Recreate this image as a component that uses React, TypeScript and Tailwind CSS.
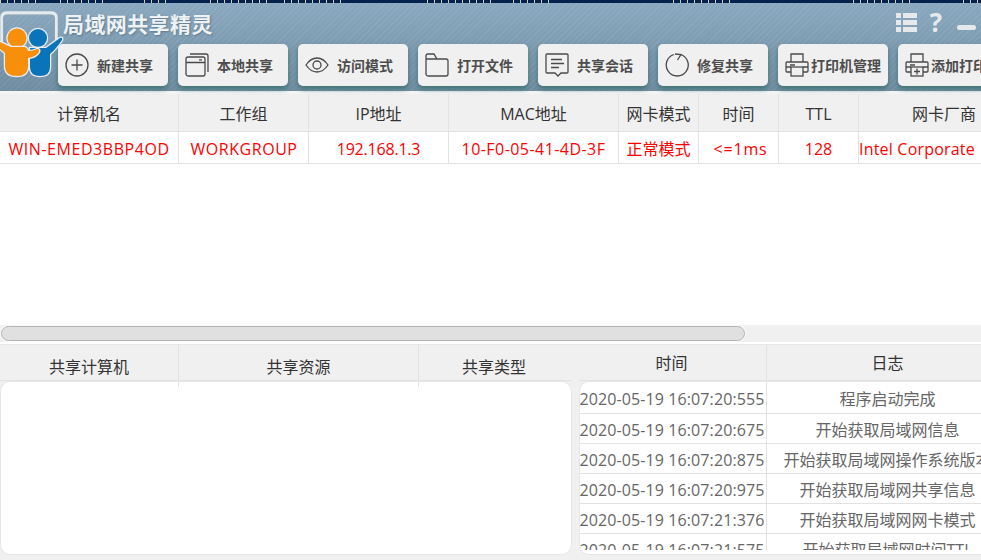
import { ReactNode } from "react";

const font = "font-['Open_Sans','Noto_Sans_CJK_SC',sans-serif]";

// toolbar icons, drawn on a 24 x 24 box
const icons: Record<string, ReactNode> = {
  add: (
    <>
      <circle cx="12" cy="12" r="11" />
      <path d="M12 6.500v11M6.500 12h11" />
    </>
  ),
  windows: (
    <>
      <rect x="1" y="4" width="19" height="19" rx="2" />
      <path d="M1 9.500h19M5 1h16a2 2 0 0 1 2 2v16M14 6.800h3" />
    </>
  ),
  eye: (
    <>
      <path d="M1 12c3-4.500 7-7 11-7s8 2.500 11 7c-3 4.500-7 7-11 7s-8-2.500-11-7z" />
      <circle cx="12" cy="12" r="4" />
    </>
  ),
  folder: <path d="M1 21V3a2 2 0 0 1 2-2h6l3 5h9a2 2 0 0 1 2 2v13a2 2 0 0 1-2 2H3a2 2 0 0 1-2-2zM12 6H1" />,
  chat: (
    <>
      <path d="M2 1h20a1 1 0 0 1 1 1v17a1 1 0 0 1-1 1h-6l-3 3-3-3H2a1 1 0 0 1-1-1V2a1 1 0 0 1 1-1z" />
      <path d="M6 6.500h11M6 10.500h13M6 14.500h8" />
    </>
  ),
  repair: (
    <>
      <path d="M9 1.500a11 11 0 1 0 6.500 0" />
      <path d="M12.500 7l3.500-5.500-6-.5" />
    </>
  ),
  printer: (
    <>
      <path d="M6 9V1h12v8M6 19H2a1 1 0 0 1-1-1V10a1 1 0 0 1 1-1h20a1 1 0 0 1 1 1v8a1 1 0 0 1-1 1h-4" />
      <rect x="6" y="14" width="12" height="9" />
      <path d="M1 14h5M18 14h5M5 12h5" />
    </>
  ),
  printerAdd: (
    <>
      <path d="M6 9V1h12v8M6 19H2a1 1 0 0 1-1-1V10a1 1 0 0 1 1-1h20a1 1 0 0 1 1 1v8a1 1 0 0 1-1 1h-4" />
      <rect x="6" y="14" width="12" height="9" />
      <path d="M1 14h5M18 14h5M5 12h5M12 15.500v6M9 18.500h6" />
    </>
  ),
};

const tools = [
  { icon: "add", label: "新建共享" },
  { icon: "windows", label: "本地共享" },
  { icon: "eye", label: "访问模式" },
  { icon: "folder", label: "打开文件" },
  { icon: "chat", label: "共享会话" },
  { icon: "repair", label: "修复共享" },
  { icon: "printer", label: "打印机管理" },
  { icon: "printerAdd", label: "添加打印机" },
];

const hostCols = [
  { w: "w-[179px]", head: "计算机名", val: "WIN-EMED3BBP4OD", t: "tracking-[0.55px]" },
  { w: "w-[130px]", head: "工作组", val: "WORKGROUP", t: "tracking-[0.55px] pl-[1px]" },
  { w: "w-[140px]", head: "IP地址", val: "192.168.1.3", t: "tracking-[-0.2px]" },
  { w: "w-[170px]", head: "MAC地址", val: "10-F0-05-41-4D-3F", t: "tracking-[0.45px]" },
  { w: "w-[80px]", head: "网卡模式", val: "正常模式", t: "" },
  { w: "w-[80px]", head: "时间", val: "<=1ms", t: "tracking-[0.8px] pl-[4px]" },
  { w: "w-[80px]", head: "TTL", val: "128", t: "" },
];

const logs = [
  ["2020-05-19 16:07:20:555", "程序启动完成"],
  ["2020-05-19 16:07:20:675", "开始获取局域网信息"],
  ["2020-05-19 16:07:20:875", "开始获取局域网操作系统版本"],
  ["2020-05-19 16:07:20:975", "开始获取局域网共享信息"],
  ["2020-05-19 16:07:21:376", "开始获取局域网网卡模式"],
  ["2020-05-19 16:07:21:575", "开始获取局域网时间TTL"],
];

// bits of the desktop behind the window: [gap before, width]
const specks = [
  [0, 40], [20, 46], [38, 28], [38, 60], [14, 58], [85, 66], [20, 40], [120, 60], [120, 60], [50, 20],
];

function ToolButton({ icon, label }: { icon: string; label: string }) {
  return (
    <button className="flex h-[42px] w-[110px] shrink-0 items-center rounded-[5px] bg-[#f0f0f0] pl-[7px] shadow-[0_3px_5px_#3f7474]">
      <svg viewBox="0 0 24 24" className="h-[24px] w-[24px] shrink-0 fill-none stroke-[#4a4a4a] stroke-[1.300]">
        {icons[icon]}
      </svg>
      <span className={`whitespace-nowrap text-[14px] font-bold text-[#4d4d4d] ${label.length > 4 ? "ml-[2px]" : "ml-[8px]"}`}>
        {label}
      </span>
    </button>
  );
}

function Logo() {
  return (
    <svg viewBox="0 0 64 70" className="absolute left-0 top-[8px] h-[70px] w-[64px]">
      <path d="M2 36V6a4 4 0 0 1 4-4h46a4 4 0 0 1 4 4v24" fill="none" stroke="#e4ebef" strokeWidth="3.500" />
      <path d="M3.500 36V7a3 3 0 0 1 3-3h45a3 3 0 0 1 3 3v23" fill="none" stroke="#93a5b3" strokeWidth="1" />
      <g stroke="#e8eef2" strokeWidth="2.500" className="[paint-order:stroke]">
        <circle cx="38" cy="27" r="9" fill="#0a74bb" />
        <path d="M30 37H46L60 27Q63 26 62 29Q56 38 50 43V56Q50 65 40 65Q30 65 30 56Z" fill="#0a74bb" />
        <circle cx="17" cy="27" r="9.500" fill="#f78f0a" />
        <path d="M0 31L11 36H24Q27 36 28 40Q33 40 37 38Q40 38 39 41Q36 46 28 47V55Q28 65 17 65Q5 65 5 55V42L0 38Z" fill="#f78f0a" />
      </g>
    </svg>
  );
}

function HeadCell({ className, children }: { className: string; children: ReactNode }) {
  return <div className={`flex shrink-0 items-center justify-center text-[#333] ${className}`}>{children}</div>;
}

export default function App() {
  return (
    <div className={`relative h-[560px] w-[981px] overflow-hidden bg-[#f0f0f0] text-[16px] ${font}`}>
      {/* desktop peeking through at the top */}
      <div className="flex h-[3px] bg-[#04224c]">
        {specks.map(([gap, w], i) => (
          <span
            key={i}
            className="h-[3px] shrink-0 bg-[repeating-linear-gradient(90deg,#d9cdb8_0,#d9cdb8_1px,transparent_1px,transparent_7px)]"
            style={{ marginLeft: gap, width: w }}
          />
        ))}
      </div>

      {/* title bar + toolbar */}
      <header className="relative h-[88px] bg-[repeating-linear-gradient(135deg,#ffffff12_0,#ffffff12_1px,transparent_1px,transparent_4px),linear-gradient(#8aa8bf,#6f8ca0)] pl-[58px]">
        <Logo />
        <div className="flex h-[41px] items-start justify-between pr-[5px]">
          <h1 className="mt-[8px] ml-[5px] text-[21px] leading-[26px] font-bold tracking-[0.4px] text-[#eef2f5] [text-shadow:1px_1px_2px_#5f7a8d]">
            局域网共享精灵
          </h1>
          <div className="flex items-start text-[#e6e9ec]">
            <svg viewBox="0 0 21 21" className="mt-[9px] h-[21px] w-[21px] fill-current">
              <path d="M0 1h5v5H0zM7 1h14v5H7zM0 8h5v5H0zM7 8h14v5H7zM0 15h5v5H0zM7 15h14v5H7z" />
            </svg>
            <span className="mt-[6px] ml-[12px] w-[14px] text-center text-[26px] leading-[27px] font-bold">?</span>
            <span className="mt-[22px] ml-[14px] h-[5px] w-[19px] rounded-full bg-current" />
          </div>
        </div>
        <div className="flex gap-[10px]">
          {tools.map((t) => (
            <ToolButton key={t.label} icon={t.icon} label={t.label} />
          ))}
        </div>
      </header>

      {/* hosts table */}
      <div className="h-[3px] bg-[#f4f4f4]" />
      <div className="flex h-[38px] border-b border-[#e2e2e2]">
        {hostCols.map((c) => (
          <HeadCell key={c.head} className={`${c.w} border-r border-[#e2e2e2] pt-[3px]`}>
            {c.head}
          </HeadCell>
        ))}
        <HeadCell className="w-[170px] pt-[3px]">网卡厂商</HeadCell>
      </div>
      <div className="h-[193px] bg-white">
        <div className="flex h-[32px] rounded-tl-[8px] border-b border-[#e2e2e2] text-[#ff0000]">
          {hostCols.map((c) => (
            <div key={c.head} className={`flex shrink-0 items-center justify-center border-r border-[#e2e2e2] pt-[2px] ${c.w} ${c.t}`}>
              {c.val}
            </div>
          ))}
          <div className="flex shrink-0 items-center pt-[2px] tracking-[0.2px] whitespace-nowrap">Intel Corporate</div>
        </div>
      </div>

      {/* horizontal scrollbar */}
      <div className="flex h-[17px] items-center bg-[#f0f0f0] pl-[1px]">
        <div className="h-[15px] w-[744px] rounded-full border border-[#b4b4b4] bg-[#e0e0e0] shadow-[0_0_0_1px_#fafafa]" />
      </div>
      <div className="h-[3px] border-b border-[#e6e6e6] bg-white" />

      {/* bottom panels */}
      <div className="flex items-start gap-[7px]">
        <div className="w-[572px] shrink-0">
          <div className="flex h-[36px] border-b border-[#e2e2e2]">
            <HeadCell className="w-[179px] border-r border-[#e2e2e2] pt-[8px]">共享计算机</HeadCell>
            <HeadCell className="w-[240px] border-r border-[#e2e2e2] pt-[8px]">共享资源</HeadCell>
            <HeadCell className="w-[150px] pt-[8px]">共享类型</HeadCell>
          </div>
          <div className="h-[174px] rounded-[10px] border border-[#e6e6e6] bg-white">
            <div className="flex h-[5px]">
              <div className="w-[178px] shrink-0 border-r border-[#e2e2e2]" />
              <div className="w-[240px] shrink-0 border-r border-[#e2e2e2]" />
            </div>
          </div>
        </div>

        <div className="w-[433px] shrink-0">
          <div className="flex h-[36px] border-b border-[#e2e2e2]">
            <HeadCell className="w-[188px] border-r border-[#e2e2e2] pt-[1px] pr-[2px]">时间</HeadCell>
            <HeadCell className="w-[241px] pt-[1px]">日志</HeadCell>
          </div>
          <div className="h-[174px] rounded-[10px] border border-[#e6e6e6] bg-white">
            <div className="h-[168px] overflow-hidden rounded-t-[10px]">
              {logs.map(([time, msg], i) => (
                <div key={time} className={`flex border-b border-[#e2e2e2] text-[#666] ${i === 0 ? "h-[32px]" : "h-[30px]"}`}>
                  <div className="flex w-[187px] shrink-0 items-center justify-center border-r border-[#e2e2e2] pt-[2px] pr-[2px] tracking-[0.1px] whitespace-nowrap">
                    {time}
                  </div>
                  <div className="flex w-[241px] shrink-0 items-center justify-center pt-[2px] whitespace-nowrap">
                    {msg}
                  </div>
                </div>
              ))}
            </div>
          </div>
        </div>
      </div>
    </div>
  );
}
